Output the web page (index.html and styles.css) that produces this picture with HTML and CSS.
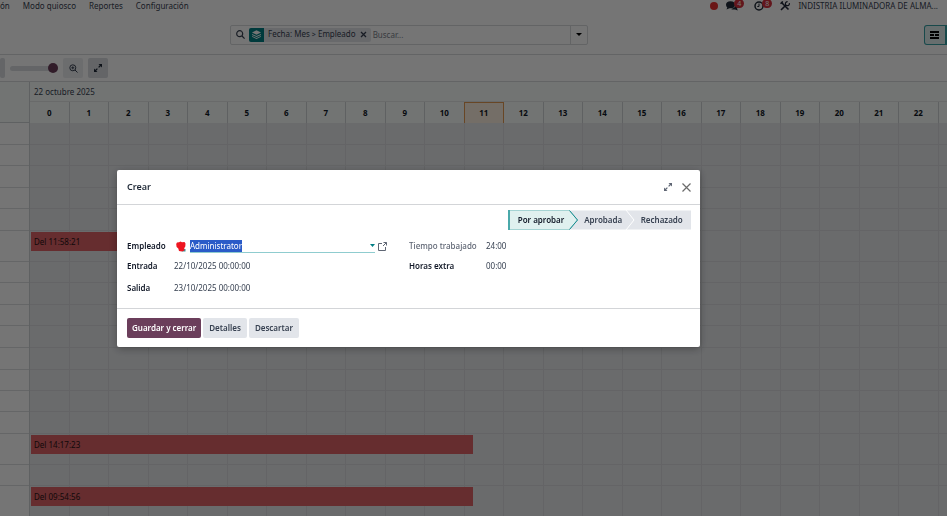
FILE: index.html
```html
<!DOCTYPE html>
<html lang="es">
  <head>
    <meta charset="UTF-8">
    <meta name="viewport" content="width=device-width, initial-scale=1.0">
    <title>Asistencias</title>
    <link rel="stylesheet" href="styles.css">
  </head>
  <body>
    <header class="navbar">
      <nav class="menu">
        <a href="#">ón</a>
        <a href="#">Modo quiosco</a>
        <a href="#">Reportes</a>
        <a href="#">Configuración</a>
      </nav>
      <div class="systray">
        <span class="dot"></span>
        <span class="tray-icon">
          <svg width="12" height="10" viewBox="0 0 12 10"><ellipse cx="4.5" cy="3.8" rx="4.5" ry="3.5"/><path d="M1.5 6 L0.5 8.5 L4 7 Z"/><path d="M9.8 3 C12.5 4.2 12.3 6.6 11 7.5 L11.8 9.5 L9 8.5 C7.5 8.8 6 8.5 5 7.9 C8 7.5 9.8 5.5 9.8 3 Z"/></svg>
          <span class="badge">4</span>
        </span>
        <span class="tray-icon">
          <svg width="10" height="10" viewBox="0 0 10 10" fill="none" stroke="#1f2937" stroke-width="1.5"><circle cx="5" cy="5" r="4"/><path d="M5 2.5 V5.5 H3.3" stroke-width="1"/></svg>
          <span class="badge">8</span>
        </span>
        <svg class="tools" width="10" height="10" viewBox="0 0 10 10" fill="none" stroke="#1f2937" stroke-width="1.6"><path d="M1.5 1.5 L8.5 8.5 M1 9 L6 4"/><path d="M9.3 2.2 A2 2 0 1 1 7.6 0.7" stroke-width="1.2"/><path d="M0.5 2.8 L2.8 0.5"/></svg>
        <span class="company">INDISTRIA ILUMINADORA DE ALMA...</span>
      </div>
    </header>

    <div class="control-panel">
      <div class="search">
        <svg class="lens" width="9" height="9" viewBox="0 0 9 9" fill="none" stroke="#374151" stroke-width="1.2"><circle cx="3.7" cy="3.7" r="3"/><path d="M6 6 L8.6 8.6"/></svg>
        <div class="facet">
          <span class="facet-icon">
            <svg width="9" height="9" viewBox="0 0 9 9" fill="#fff"><path d="M4.5 0.3 L9 2.5 L4.5 4.7 L0 2.5 Z"/><path d="M0 4 L4.5 6.1 L9 4 V4.9 L4.5 7 L0 4.9 Z"/><path d="M0 6 L4.5 8 L9 6 V6.8 L4.5 9 L0 6.8 Z"/></svg>
          </span>
          <span class="facet-text">Fecha: Mes <small>&gt;</small> Empleado</span>
          <button class="facet-close" aria-label="Quitar filtro"><svg width="7" height="7" viewBox="0 0 7 7" fill="none" stroke="#374151" stroke-width="1.3"><path d="M1 1 L6 6 M6 1 L1 6"/></svg></button>
        </div>
        <input class="search-input" type="text" placeholder="Buscar..." aria-label="Buscar">
        <button class="search-toggle" aria-label="Opciones de búsqueda"><svg width="6" height="3" viewBox="0 0 6 3"><path d="M0 0 H6 L3 3 Z"/></svg></button>
      </div>
      <button class="view-switch" aria-label="Vista Gantt"><svg width="10" height="8" viewBox="0 0 10 8"><path d="M0 0 H9 V2 H0 Z M0 3 H4 V5 H0 Z M5 3 H9 V5 H5 Z M0 6 H9 V8 H0 Z"/></svg></button>
    </div>

    <div class="toolbar">
      <button class="tool tool-cut" aria-label="Anterior"></button>
      <input class="range" type="range" min="0" max="10" value="10" aria-label="Zoom">
      <button class="tool tool-light" aria-label="Acercar"><svg width="9" height="9" viewBox="0 0 9 9" fill="none" stroke="#374151"><circle cx="3.8" cy="3.8" r="3"/><path d="M6 6 L8.5 8.5 M2.3 3.8 H5.3 M3.8 2.3 V5.3"/></svg></button>
      <button class="tool" aria-label="Expandir"><svg width="8" height="8" viewBox="0 0 8 8"><path d="M4.5 0 H8 V3.5 Z M0 4.5 V8 H3.5 Z"/><path d="M1 7 L3.4 4.6 M4.6 3.4 L7 1" stroke="#1f2937" stroke-width="1.3"/></svg></button>
    </div>

    <main class="gantt">
      <div class="gantt-side">
        <div class="side-head"></div>
        <div class="side-rows"></div>
      </div>
      <div class="gantt-main">
        <div class="gantt-title">22 octubre 2025</div>
        <div class="track">
          <div class="hours"></div>
          <div class="rows"></div>
        </div>
      </div>
    </main>

    <div class="backdrop">
      <section class="modal" role="dialog" aria-labelledby="modal-title">
        <header class="modal-header">
          <h1 id="modal-title">Crear</h1>
          <button class="icon-btn" aria-label="Expandir"><svg width="8" height="8" viewBox="0 0 8 8" fill="#5f6674"><path d="M4.5 0 H8 V3.5 Z M0 4.5 V8 H3.5 Z"/><path d="M1 7 L3.4 4.6 M4.6 3.4 L7 1" stroke="#5f6674" stroke-width="1.2"/></svg></button>
          <button class="icon-btn" aria-label="Cerrar"><svg width="9" height="9" viewBox="0 0 9 9" fill="none" stroke="#6b6b6b" stroke-width="1.2"><path d="M0.5 0.5 L8.5 8.5 M8.5 0.5 L0.5 8.5"/></svg></button>
        </header>
        <div class="modal-body">
          <div class="status">
            <svg class="status-shape" width="183" height="20" viewBox="0 0 183 20" fill="none">
              <path d="M61 0.5 H183 V19.5 H61 Z" fill="#e2e5ea"/>
              <path d="M118 0 L126 10 L118 20" stroke="#fff"/>
              <path d="M1 0.5 H61.5 L69.5 10 L61.5 19.5 H1 Z" fill="#e0f0ef" stroke="#a5d3d3"/>
              <path d="M61.5 0.5 L69.5 10 L61.5 19.5" stroke="#128a8d"/>
              <path d="M1 0 V20" stroke="#4aa9aa" stroke-width="2"/>
            </svg>
            <button class="step step-active">Por aprobar</button>
            <button class="step">Aprobada</button>
            <button class="step">Rechazado</button>
          </div>
          <div class="form">
            <div class="fields">
              <label for="empleado">Empleado</label>
              <div class="employee">
                <svg width="10" height="11" viewBox="0 0 10 11"><path d="M6 8 H9.5 V10.5 H6 Z" fill="#3f8f93"/><path d="M1 1.5 L3 1.2 L4.5 0.6 L6 1.2 L8.5 1 L9.5 2.5 L9.3 5.5 L8.3 7 L8.3 9.5 L6 10.5 L3 10 L2.3 7.5 L0.6 6 L0.2 3 Z" fill="#ee1620"/></svg>
                <div class="combo">
                  <input id="empleado" type="text" value="Administrator" autofocus>
                  <svg width="5" height="3" viewBox="0 0 5 3" fill="#017e84"><path d="M0 0 H5 L2.5 3 Z"/></svg>
                </div>
                <button class="icon-btn" aria-label="Abrir empleado"><svg width="9" height="9" viewBox="0 0 9 9" fill="none" stroke="#5f6674"><path d="M4 1.5 H0.5 V8.5 H7.5 V5 M5.5 0.5 H8.5 V3.5 M8.5 0.5 L5 4"/></svg></button>
              </div>
              <span class="label">Entrada</span><span>22/10/2025 00:00:00</span>
              <span class="label">Salida</span><span>23/10/2025 00:00:00</span>
            </div>
            <div class="fields fields-right">
              <span class="label label-muted">Tiempo trabajado</span><span>24:00</span>
              <span class="label">Horas extra</span><span>00:00</span>
            </div>
          </div>
        </div>
        <footer class="modal-footer">
          <button class="btn btn-primary">Guardar y cerrar</button>
          <button class="btn">Detalles</button>
          <button class="btn">Descartar</button>
        </footer>
      </section>
    </div>

    <script src="script.js"></script>
  </body>
</html>
```
FILE: styles.css
```css
* {
  box-sizing: border-box;
}
body {
  margin: 0;
  height: 100vh;
  overflow: hidden;
  display: flex;
  flex-direction: column;
  background-color: #fff;
  color: #374151;
  font-family: "Noto Sans", "Open Sans", sans-serif;
  font-size: 8px;
  line-height: 12px;
}
button, input {
  font: inherit;
  color: inherit;
  padding: 0;
  margin: 0;
  border: none;
  background: none;
}
a {
  color: inherit;
  text-decoration: none;
}
svg {
  display: block;
  flex-shrink: 0;
}
.navbar {
  height: 15px;
  display: flex;
  justify-content: space-between;
  padding-right: 9px;
}
.menu {
  display: flex;
  gap: 13px;
}
.systray {
  display: flex;
  align-items: center;
  height: 12px;
}
.dot {
  width: 8px;
  height: 8px;
  border-radius: 50%;
  background-color: #e83030;
  margin-right: 8px;
}
.tray-icon {
  position: relative;
  margin-right: 16px;
  fill: #1f2937;
}
.badge {
  position: absolute;
  left: 8px;
  top: -2px;
  width: 10px;
  height: 9px;
  border-radius: 5px;
  background-color: #d5303e;
  color: #fff;
  font-size: 7px;
  line-height: 9px;
  text-align: center;
}
.tools {
  margin-right: 8px;
}
.control-panel {
  height: 40px;
  border-bottom: 1px solid #d8dadd;
  display: flex;
  justify-content: space-between;
  align-items: center;
  padding-left: 230px;
}
.search {
  display: flex;
  align-items: center;
  width: 358px;
  height: 20px;
  border: 1px solid #d8dadd;
  border-radius: 2px;
  padding-left: 5px;
}
.facet {
  display: flex;
  align-items: center;
  height: 14px;
  margin: 0 2px 0 4px;
  padding-right: 4px;
  gap: 4px;
  border-radius: 2px;
  background-color: #e2e5ea;
  overflow: hidden;
}
.facet-icon {
  width: 15px;
  height: 14px;
  display: flex;
  align-items: center;
  justify-content: center;
  background-color: #017e84;
}
.facet small {
  font-size: 7px;
}
.facet-close {
  display: flex;
}
.search-input {
  flex: 1;
  min-width: 0;
}
.search-input::placeholder {
  color: #7c828c;
}
.search-toggle {
  display: flex;
  align-items: center;
  justify-content: center;
  width: 17px;
  height: 18px;
  border-left: 1px solid #d8dadd;
}
.view-switch {
  display: flex;
  align-items: center;
  justify-content: center;
  width: 23px;
  height: 20px;
  border: 1px solid #35a0a4;
  border-right-width: 2px;
  border-radius: 3px 0 0 3px;
  background-color: #e0f0ef;
}
.toolbar {
  height: 26px;
  display: flex;
  align-items: center;
}
.tool {
  display: flex;
  align-items: center;
  justify-content: center;
  width: 20px;
  height: 20px;
  margin-right: 5px;
  border-radius: 2px;
  background-color: #d9dce1;
  fill: #1f2937;
}
.tool-cut {
  width: 5px;
}
.tool-light {
  background-color: #eceef0;
}
.range {
  appearance: none;
  width: 48px;
  height: 10px;
  margin-right: 5px;
}
.range::-webkit-slider-runnable-track {
  height: 5px;
  border-radius: 3px;
  background-color: #d9dce1;
}
.range::-webkit-slider-thumb {
  appearance: none;
  width: 10px;
  height: 10px;
  margin-top: -3px;
  border-radius: 50%;
  background-color: #6b3e5b;
}
.gantt {
  flex: 1;
  display: flex;
  overflow: hidden;
  border-top: 1px solid #d8dadd;
  background-color: #f8fdfb;
}
.gantt-side {
  width: 30px;
  border-right: 1px solid #d0d3d6;
}
.side-head {
  height: 41px;
  border-bottom: 1px solid #d0d3d6;
}
.side-rows {
  background-color: #fff;
}
.gantt-main {
  flex: 1;
  overflow: hidden;
}
.gantt-title {
  height: 20px;
  line-height: 20px;
  padding-left: 4px;
  border-bottom: 1px solid #e4e6e8;
}
/* the last hour runs past the right edge */
.track {
  margin-right: -31px;
}
.hours {
  display: grid;
  grid-template-columns: repeat(24, 1fr);
  height: 21px;
  line-height: 22px;
  text-align: center;
  font-weight: 700;
  color: #111827;
}
.hour {
  border-right: 1px solid #d0d3d6;
}
.hour-now {
  border: 1px solid #e29a52;
  border-bottom: none;
  margin-left: -1px;
  line-height: 20px;
  background-color: #fcf0e0;
}
.row {
  position: relative;
  display: grid;
  grid-template-columns: repeat(24, 1fr);
  background-color: #e7e9ec;
}
.cell {
  border-right: 1px solid #d9dbde;
  border-bottom: 1px solid #d9dbde;
}
.side-row {
  border-bottom: 1px solid #dcdee1;
}
.short {
  height: 21px;
}
.medium {
  height: 22px;
}
.tall {
  height: 31px;
}
.pill {
  position: absolute;
  left: 1px;
  top: 1px;
  height: 19px;
  line-height: 19px;
  padding-left: 3px;
  background-color: #de6266;
  color: #2a1416;
}
.backdrop {
  position: fixed;
  inset: 0;
  padding: 170px 247px 0 117px;
  background-color: rgba(0, 0, 0, 0.54);
}
.modal {
  background-color: #fff;
  border-radius: 2px;
  box-shadow: 0 2px 8px rgba(0, 0, 0, 0.3);
}
.modal-header {
  display: flex;
  align-items: center;
  height: 35px;
  gap: 10px;
  padding: 0 9px 0 10px;
  border-bottom: 1px solid #d3d5d8;
}
.modal-header h1 {
  flex: 1;
  margin: 0;
  font-size: 9px;
  font-weight: 600;
  color: #1f2937;
}
.icon-btn {
  display: flex;
}
.modal-body {
  padding: 5px 9px 8px 10px;
}
.status {
  position: relative;
  display: flex;
  width: 183px;
  height: 20px;
  margin-left: auto;
}
.status-shape {
  position: absolute;
  left: 0;
  top: 0;
}
.step {
  position: relative;
  flex: 1;
  font-weight: 600;
}
.step-active {
  flex: 0 0 66px;
  color: #111827;
}
.form {
  display: flex;
  padding-top: 6px;
}
.fields {
  flex: 1;
  display: grid;
  grid-template-columns: 47px 1fr;
  grid-template-rows: 20px 20px 24px;
  align-items: center;
}
.fields-right {
  grid-template-columns: 77px 1fr;
}
.fields label, .label {
  font-weight: 600;
  color: #111827;
}
.fields .label-muted {
  font-weight: 500;
  color: #5f6674;
}
.employee {
  display: flex;
  align-items: center;
  padding: 0 22px 0 2px;
}
.combo {
  flex: 1;
  display: flex;
  align-items: center;
  height: 13px;
  margin: 0 3px 0 4px;
  border-bottom: 1px solid #8fcccf;
}
.combo input {
  flex: 1;
  min-width: 0;
  height: 12px;
  outline: none;
}
.combo input::selection {
  background-color: #2a5bc8;
  color: #fff;
}
.modal-footer {
  display: flex;
  gap: 2px;
  padding: 9px 10px;
  border-top: 1px solid #d3d5d8;
}
.btn {
  height: 20px;
  padding: 0 6px;
  border-radius: 2px;
  background-color: #e2e5ea;
  font-weight: 600;
}
.btn-primary {
  padding: 0 5px;
  background-color: #6b3e5b;
  color: #fff;
}
```
FILE: script.js
```js
const hours = document.querySelector('.hours');
const rows = document.querySelector('.rows');
const sideRows = document.querySelector('.side-rows');

const gantt = [
  { size: 'medium' }, { size: 'short' }, { size: 'medium' }, { size: 'short' }, { size: 'medium' },
  { size: 'tall', pill: 'Del 11:58:21' },
  { size: 'short' }, { size: 'medium' }, { size: 'short' }, { size: 'medium' }, { size: 'medium' },
  { size: 'short' }, { size: 'short' }, { size: 'medium' },
  { size: 'tall', pill: 'Del 14:17:23' },
  { size: 'short' },
  { size: 'tall', pill: 'Del 09:54:56' }
];

for (let h = 0; h < 24; h++) {
  const hour = document.createElement('div');
  hour.className = h === 11 ? 'hour hour-now' : 'hour';
  // the last column is only partly visible, so it gets no number
  hour.innerText = h < 23 ? h : '';
  hours.appendChild(hour);
}

gantt.forEach(item => {
  const side = document.createElement('div');
  side.className = 'side-row ' + item.size;
  sideRows.appendChild(side);

  const row = document.createElement('div');
  row.className = 'row ' + item.size;
  for (let h = 0; h < 24; h++) {
    const cell = document.createElement('div');
    cell.className = 'cell';
    row.appendChild(cell);
  }
  if (item.pill) {
    const pill = document.createElement('div');
    pill.className = 'pill';
    pill.style.width = '46.6%';
    pill.innerText = item.pill;
    row.appendChild(pill);
  }
  rows.appendChild(row);
});

const empleado = document.getElementById('empleado');
empleado.focus();
empleado.select();
```
